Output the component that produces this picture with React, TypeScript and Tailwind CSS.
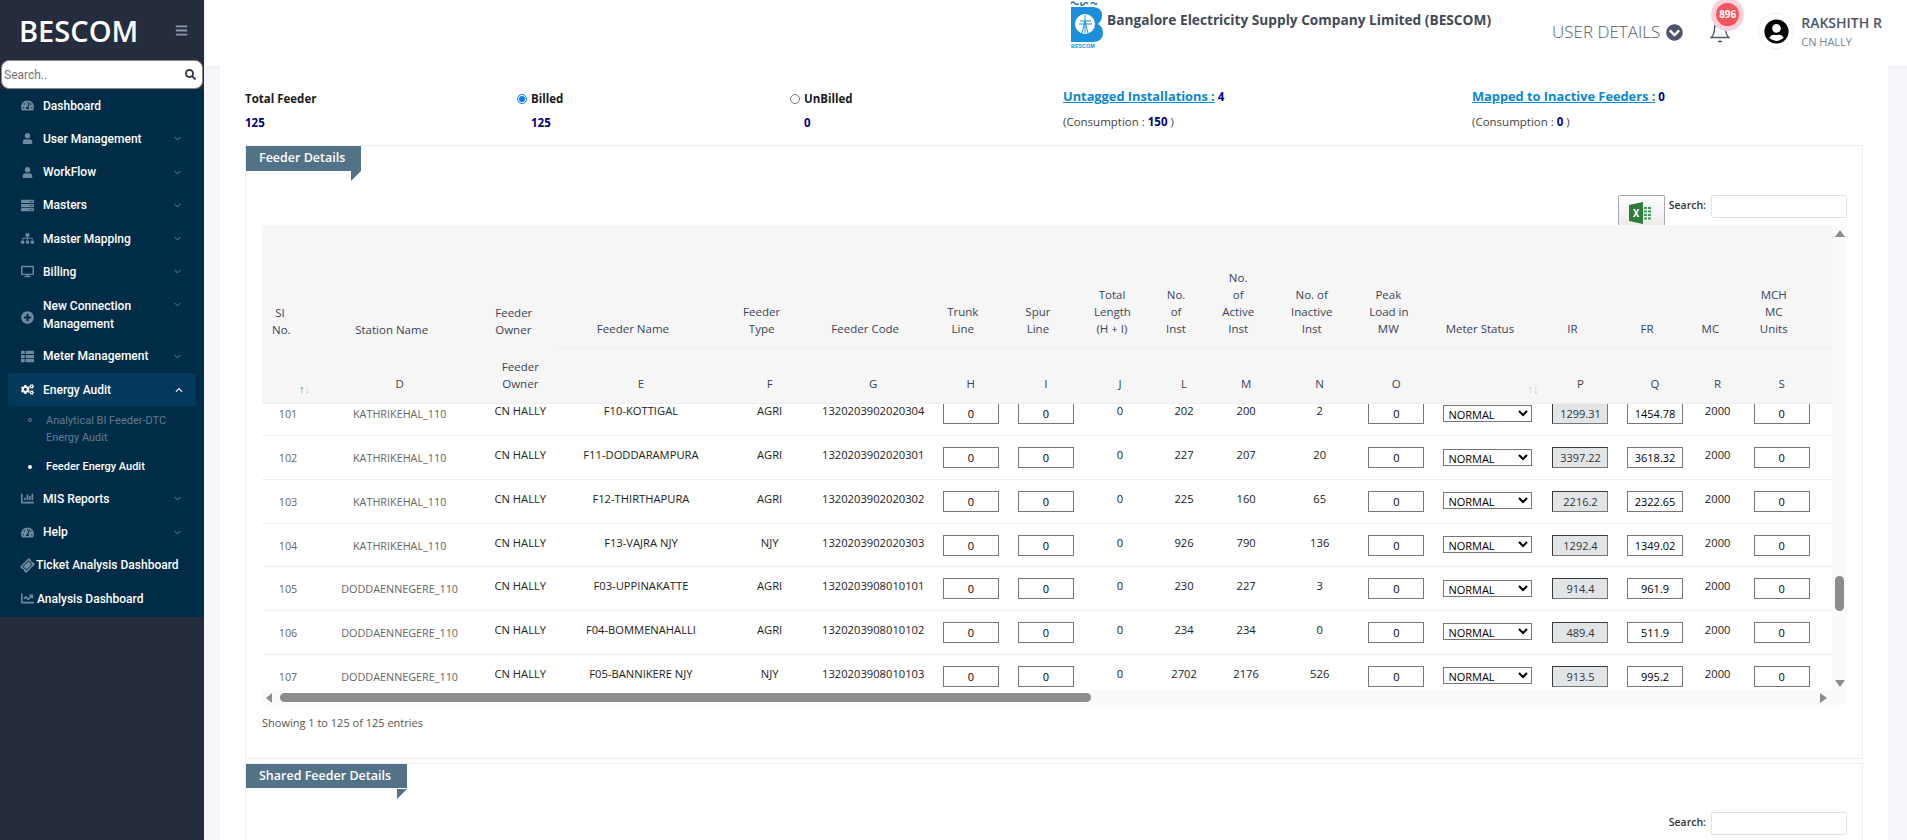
import React from "react";
import { FaTachometerAlt, FaUser, FaServer, FaSitemap, FaDesktop, FaPlusCircle, FaThList, FaCogs, FaChartBar, FaTicketAlt, FaChartLine, FaSearch, FaBars, FaChevronCircleDown, FaUserCircle, FaChevronUp } from "react-icons/fa";
import { FiChevronDown } from "react-icons/fi";

const colClasses = ["w-[52px]","w-[171px]","w-[70px]","w-[171px]","w-[86px]","w-[121px]","w-[74px]","w-[76px]","w-[72px]","w-[56px]","w-[68px]","w-[79px]","w-[74px]","w-[109px]","w-[76px]","w-[73px]","w-[52px]","w-[76px]","w-[82px]"];

function Cols() {
  return <colgroup>{colClasses.map((c, i) => <col key={i} className={c} />)}</colgroup>;
}

const heads: string[][] = [["SI","No."],["Station Name"],["Feeder","Owner"],["Feeder Name"],["Feeder","Type"],["Feeder Code"],["Trunk","Line"],["Spur","Line"],["Total","Length","(H + I)"],["No.","of","Inst"],["No.","of","Active","Inst"],["No. of","Inactive","Inst"],["Peak","Load in","MW"],["Meter Status"],["IR"],["FR"],["MC"],["MCH","MC","Units"],["Consumption"]];
const letters: string[][] = [[""],["D"],["Feeder","Owner"],["E"],["F"],["G"],["H"],["I"],["J"],["L"],["M"],["N"],["O"],[""],["P"],["Q"],["R"],["S"],[""]];

const rows = [
  ["101","KATHRIKEHAL_110","F10-KOTTIGAL","AGRI","1320203902020304","202","200","2","1299.31","1454.78"],
  ["102","KATHRIKEHAL_110","F11-DODDARAMPURA","AGRI","1320203902020301","227","207","20","3397.22","3618.32"],
  ["103","KATHRIKEHAL_110","F12-THIRTHAPURA","AGRI","1320203902020302","225","160","65","2216.2","2322.65"],
  ["104","KATHRIKEHAL_110","F13-VAJRA NJY","NJY","1320203902020303","926","790","136","1292.4","1349.02"],
  ["105","DODDAENNEGERE_110","F03-UPPINAKATTE","AGRI","1320203908010101","230","227","3","914.4","961.9"],
  ["106","DODDAENNEGERE_110","F04-BOMMENAHALLI","AGRI","1320203908010102","234","234","0","489.4","511.9"],
  ["107","DODDAENNEGERE_110","F05-BANNIKERE NJY","NJY","1320203908010103","2702","2176","526","913.5","995.2"],
];

type Item = { icon: React.ReactNode; label: string[]; chevron?: boolean };
const ic = "text-[#6d8aa0] text-[13px]";
const icUser = "ml-[1px] text-[#6d8aa0] text-[11px]";
const items1: Item[] = [
  { icon: <FaTachometerAlt className={ic} />, label: ["Dashboard"] },
  { icon: <FaUser className={icUser} />, label: ["User Management"], chevron: true },
  { icon: <FaUser className={icUser} />, label: ["WorkFlow"], chevron: true },
  { icon: <FaServer className={ic} />, label: ["Masters"], chevron: true },
  { icon: <FaSitemap className={ic} />, label: ["Master Mapping"], chevron: true },
  { icon: <FaDesktop className={ic} />, label: ["Billing"], chevron: true },
  { icon: <FaPlusCircle className={ic} />, label: ["New Connection", "Management"], chevron: true },
  { icon: <FaThList className={ic} />, label: ["Meter Management"], chevron: true },
];

function NavItem({ item }: { item: Item }) {
  const two = item.label.length > 1;
  return (
    <div className={two ? "flex h-[51.2px] pl-[21px] pr-[21px]" : "flex h-[33.25px] items-center pl-[21px] pr-[21px]"}>
      <span className={two ? "flex w-[22px] shrink-0 items-center pt-[6px]" : "flex w-[22px] shrink-0 items-center"}>{item.icon}</span>
      <span className={two ? "flex-1 pt-[8px] text-[12px] leading-[18px] text-white" : "flex-1 text-[12px] leading-[18px] text-white"}>
        {item.label.map((l) => <span key={l} className="block">{l}</span>)}
      </span>
      {item.chevron && <span className={two ? "pt-[10px]" : ""}><FiChevronDown className="text-[11px] text-[#6d8aa0]" /></span>}
    </div>
  );
}

function Sidebar() {
  return (
    <aside className="flex w-[204px] shrink-0 flex-col bg-[#252c3d] font-['Roboto',sans-serif] font-medium">
      <div className="flex h-[60px] items-center justify-between pl-[19px] pr-[16px]">
        <span className="font-['Open_Sans',sans-serif] text-[29px] font-semibold leading-none text-white">BESCOM</span>
        <FaBars className="text-[13px] text-[#8a97a8]" />
      </div>
      <div className="mx-[1px] flex h-[29px] items-center rounded-[8px] border border-[#888] bg-white pl-[2px] pr-[6px]">
        <input placeholder="Search.." className="w-full min-w-0 bg-transparent text-[12px] font-normal text-[#333] outline-none placeholder:text-[#757575]" />
        <FaSearch className="shrink-0 text-[11px] text-[#2a3340]" />
      </div>
      <nav className="bg-[#012c47] pb-[2px]">
        {items1.map((it) => <NavItem key={it.label[0]} item={it} />)}
        <div className="mx-[8px] flex h-[33.25px] items-center rounded-[3px] bg-[#03395a] pl-[13px] pr-[13px]">
          <span className="flex w-[22px] shrink-0 items-center"><FaCogs className="text-[13px] text-white" /></span>
          <span className="flex-1 text-[12px] text-white">Energy Audit</span>
          <FaChevronUp className="text-[8px] text-[#dbe5ec]" />
        </div>
        <div className="flex h-[46px] pl-[28px] pt-[6px]">
          <span className="mt-[6px] h-[4px] w-[4px] shrink-0 rounded-full border border-[#5f7c90]" />
          <span className="pl-[14px] text-[11px] font-normal leading-[17px] text-[#5f7c90]">Analytical BI Feeder-DTC<br />Energy Audit</span>
        </div>
        <div className="flex h-[30px] items-center pl-[28px]">
          <span className="h-[4px] w-[4px] shrink-0 rounded-full bg-white" />
          <span className="pl-[14px] text-[11px] text-white">Feeder Energy Audit</span>
        </div>
        <NavItem item={{ icon: <FaChartBar className={ic} />, label: ["MIS Reports"], chevron: true }} />
        <NavItem item={{ icon: <FaTachometerAlt className={ic} />, label: ["Help"], chevron: true }} />
        <div className="flex h-[33.25px] items-center pl-[21px]">
          <FaTicketAlt className="-rotate-45 text-[13px] text-[#6d8aa0]" />
          <span className="pl-[2px] text-[12px] text-white">Ticket Analysis Dashboard</span>
        </div>
        <div className="flex h-[33.25px] items-center pl-[21px]">
          <FaChartLine className="text-[13px] text-[#6d8aa0]" />
          <span className="pl-[3px] text-[12px] text-white">Analysis Dashboard</span>
        </div>
      </nav>
    </aside>
  );
}

function Logo() {
  return (
    <svg viewBox="0 0 34 48" className="h-[48px] w-[34px] shrink-0">
      <path d="M1 3.5 q2 -3 4 0 q2 2 3.5 0 M11 2 v3 q2 1 3 -1 q2 -3 4 0 M21 4 q2 -3 4 0 q1 1 2 -1" fill="none" stroke="#2a6fb0" strokeWidth="1.4" />
      <path d="M1 7 H22 Q32 7 32 15 Q32 21 28 24 Q33 27 33 33 Q33 42 22 42 H1 Z" fill="#1a8fdc" />
      <circle cx="15" cy="24" r="10" fill="#fff" />
      <path d="M15 15 V33 M10 21 H21 M9 24 H22 M12 33 L15 21 L18 33" fill="none" stroke="#1a8fdc" strokeWidth="1" />
      <rect x="0" y="43" width="31" height="5" fill="#fff" />
      <text x="1" y="47.5" fontSize="5.4" fontWeight="700" fill="#1a8fdc" fontFamily="'Liberation Sans', sans-serif">BESCOM</text>
    </svg>
  );
}

function Topbar() {
  return (
    <header className="ml-[2px] flex h-[66px] shrink-0 bg-white pl-[864px] shadow-[0_1px_4px_rgba(0,0,0,0.06)]">
      <div className="flex w-[513px] items-start">
        <Logo />
        <span className="whitespace-nowrap pl-[3px] pt-[10px] text-[13.7px] font-bold leading-[20px] text-[#434a58]">Bangalore Electricity Supply Company Limited (BESCOM)</span>
      </div>
      <div className="flex h-[64px] items-center">
        <span className="-ml-[31px] whitespace-nowrap font-['Open_Sans',sans-serif] text-[17px] font-light text-[#555c6b]">USER DETAILS</span>
        <FaChevronCircleDown className="ml-[6px] text-[17px] text-[#4d5469]" />
      </div>
      <div className="relative ml-[27px] mt-[21px] h-[22px] w-[20px]">
        <svg viewBox="0 0 18 20" className="h-[22px] w-[20px]" fill="none" stroke="#4d5469" strokeWidth="1.2">
          <path d="M1 15 C3 13 4 11 4 7 C4 3 6 1 9 1 C12 1 14 3 14 7 C14 11 15 13 17 15 Z" />
          <path d="M7.5 18 Q9 19.5 10.5 18" strokeWidth="1.5" />
        </svg>
        <span className="absolute left-[1px] top-[-23px] flex h-[33px] w-[33px] items-center justify-center rounded-full bg-[#fbd0dc]">
          <span className="flex h-[23px] w-[23px] items-center justify-center rounded-full bg-[#f4545c] text-[10px] font-bold text-white">896</span>
        </span>
      </div>
      <div className="ml-[28px] mt-[13px] flex h-[36px] w-[36px] items-center justify-center rounded-full border border-[#eeeeee]">
        <FaUserCircle className="text-[25px] text-black" />
      </div>
      <div className="whitespace-nowrap pl-[7px] pt-[13px] font-['Open_Sans',sans-serif]">
        <div className="text-[14px] font-semibold leading-[20px] text-[#4d5566]">RAKSHITH R</div>
        <div className="pt-[1px] text-[11px] leading-[16px] text-[#7a8299]">CN HALLY</div>
      </div>
    </header>
  );
}

function Stats() {
  const num = "text-[11.5px] font-bold text-[#00007f]";
  const link = "text-[12.8px] font-bold text-[#0a87d6] underline";
  return (
    <div className="grid grid-cols-[272px_273px_273px_410px_1fr] pt-[24px] text-[11.5px] leading-[17px] text-[#333]">
      <div>
        <div className="font-bold text-[#1a1a1a]">Total Feeder</div>
        <div className={"pt-[7px] " + num}>125</div>
      </div>
      <div>
        <div className="flex items-center font-bold text-[#1a1a1a]"><input type="radio" defaultChecked name="b" className="m-0 h-[10px] w-[10px]" /><span className="pl-[4px]">Billed</span></div>
        <div className={"pl-[14px] pt-[7px] " + num}>125</div>
      </div>
      <div>
        <div className="flex items-center font-bold text-[#1a1a1a]"><input type="radio" name="b" className="m-0 h-[10px] w-[10px]" /><span className="pl-[4px]">UnBilled</span></div>
        <div className={"pl-[14px] pt-[7px] " + num}>0</div>
      </div>
      <div className="-mt-[2px]">
        <div><span className={link}>Untagged Installations :</span> <span className={num}>4</span></div>
        <div className="pt-[8px] text-[#444]">(Consumption : <span className={num}>150</span> )</div>
      </div>
      <div className="-mt-[2px] -ml-[1px]">
        <div><span className={link}>Mapped to Inactive Feeders :</span> <span className={num}>0</span></div>
        <div className="pt-[8px] text-[#444]">(Consumption : <span className={num}>0</span> )</div>
      </div>
    </div>
  );
}

function Tab({ label, width, gap }: { label: string; width: string; gap?: boolean }) {
  return (
    <div className={width}>
      <div className={"flex items-center pl-[13px] text-[12.5px] font-semibold text-white bg-[#527288] " + (gap ? "h-[24px]" : "h-[25px]")}>{label}</div>
      {gap && <div className="h-[1px]" />}
      <div className="ml-auto h-[10px] w-[10px] bg-[#527288] [clip-path:polygon(0_0,100%_0,0_100%)]" />
    </div>
  );
}

function SearchBox() {
  return (
    <div className="flex items-start">
      <span className="pr-[5px] pt-[1px] text-[10.5px] font-semibold leading-[19px] text-[#333]">Search:</span>
      <input className="h-[23px] w-[136px] rounded-[2px] border border-[#e2e2e2] bg-white" />
    </div>
  );
}

function Excel() {
  return (
    <div className="mr-[4px] flex h-[30px] w-[47px] items-start justify-center rounded-t-[2px] border border-b-0 border-[#a8a8a8] bg-gradient-to-b from-white to-[#ececec] pt-[6px]">
      <svg viewBox="0 0 24 22" className="h-[22px] w-[24px]">
        <rect x="9" y="3" width="15" height="16" fill="#eef3ee" />
        <path d="M15 5h3v2h-3zM19 5h3v2h-3zM15 8.5h3v2h-3zM19 8.5h3v2h-3zM15 12h3v2h-3zM19 12h3v2h-3zM15 15.5h3v2h-3zM19 15.5h3v2h-3z" fill="#3c9a56" />
        <path d="M0 3 L14 0 V22 L0 19 Z" fill="#2f7d3b" />
        <path d="M4 7 L6 7 L7.2 9.6 L8.5 7 L10.4 7 L8.3 11 L10.4 15 L8.4 15 L7.2 12.4 L5.9 15 L4 15 L6.2 11 Z" fill="#fff" />
      </svg>
    </div>
  );
}

function Field({ value, gray }: { value: string; gray?: boolean }) {
  return (
    <input
      readOnly
      value={value}
      className={gray
        ? "block mx-auto h-[21px] w-[56px] border border-[#767676] border-t-[#3a3a3a] border-l-[#3a3a3a] bg-[#e2e5e8] text-center text-[11px] text-[#333]"
        : "block mx-auto h-[21px] w-[56px] border border-[#767676] bg-white text-center text-[11px] text-black"}
    />
  );
}

function FeederTable() {
  const tdBase = "h-[43.67px] border-b border-[#eeeeee] p-0 text-center align-middle";
  const hi = "pb-[6px] text-[11.2px] font-medium text-[#222]";
  const lo = "text-[10.8px] text-[#666]";
  return (
    <div>
      <div className="flex">
        <div className="w-[1570px] overflow-hidden">
          <table className="w-[1640px] table-fixed border-collapse bg-[#f6f6f6] text-[11.5px] leading-[17px] text-[#3a4356]">
            <Cols />
            <thead>
              <tr>
                {heads.map((h, i) => (
                  <th key={i} className={(i < 3 ? "" : "border-b border-[#eeeeee] ") + (i === 18 ? "h-[122px] pl-[13px] pb-[44px] text-left align-bottom font-normal" : i < 3 ? "h-[122px] pl-[10px] pr-[26px] pb-[9px] text-center align-bottom font-normal" : "h-[122px] pl-[10px] pr-[26px] pb-[10px] text-center align-bottom font-normal")}>
                    {h.map((l) => <span key={l} className="block whitespace-nowrap">{l}</span>)}
                  </th>
                ))}
              </tr>
              <tr>
                {letters.map((h, i) => (
                  <th key={i} className="relative h-[56px] p-0 pb-[11px] text-center align-bottom font-normal">
                    {h.map((l) => <span key={l || "e"} className="block whitespace-nowrap">{l || "\u00a0"}</span>)}
                    {(i === 0 || i === 13) && <span className="absolute bottom-[8px] right-[4px] text-[11px] leading-[12px] text-[#c8c8c8]"><span className={i === 0 ? "text-[#777]" : ""}>↑</span>↓</span>}
                  </th>
                ))}
              </tr>
            </thead>
          </table>
          <div className="h-[287px] overflow-hidden border-t border-[#eeeeee]">
            <table className="-mt-[11.7px] w-[1640px] table-fixed border-collapse bg-white text-[11.5px] leading-[17px]">
              <Cols />
              <tbody>
                {rows.map((r) => (
                  <tr key={r[0]}>
                    <td className={tdBase + " " + lo}>{r[0]}</td>
                    <td className={tdBase + " " + lo}>{r[1]}</td>
                    <td className={tdBase + " " + hi}>CN HALLY</td>
                    <td className={tdBase + " " + hi}>{r[2]}</td>
                    <td className={tdBase + " " + hi}>{r[3]}</td>
                    <td className={tdBase + " " + hi}>{r[4]}</td>
                    <td className={tdBase}><Field value="0" /></td>
                    <td className={tdBase}><Field value="0" /></td>
                    <td className={tdBase + " " + hi}>0</td>
                    <td className={tdBase + " " + hi}>{r[5]}</td>
                    <td className={tdBase + " " + hi}>{r[6]}</td>
                    <td className={tdBase + " " + hi}>{r[7]}</td>
                    <td className={tdBase}><Field value="0" /></td>
                    <td className={tdBase}>
                      <select className="mx-auto -mt-[1px] block h-[17px] w-[89px] border border-[#767676] bg-white text-[11px] leading-none text-black" defaultValue="NORMAL"><option>NORMAL</option></select>
                    </td>
                    <td className={tdBase}><Field value={r[8]} gray /></td>
                    <td className={tdBase}><Field value={r[9]} /></td>
                    <td className={tdBase + " " + hi}>2000</td>
                    <td className={tdBase}><Field value="0" /></td>
                    <td className={tdBase}></td>
                  </tr>
                ))}
              </tbody>
            </table>
          </div>
        </div>
        <div className="flex w-[15px] flex-col items-center bg-[#fafafa] pt-[5px]">
          <div className="h-0 w-0 border-x-[5px] border-b-[7px] border-x-transparent border-b-[#8c8c8c]" />
          <div className="mt-[339px] h-[35px] w-[9px] rounded-[5px] bg-[#8c8c8c]" />
          <div className="mt-[69px] h-0 w-0 border-x-[5px] border-t-[7px] border-x-transparent border-t-[#8c8c8c]" />
        </div>
      </div>
      <div className="flex h-[15px] items-center bg-[#fafafa] pl-[4px]">
        <div className="h-0 w-0 border-y-[5px] border-r-[6px] border-y-transparent border-r-[#8c8c8c]" />
        <div className="ml-[8px] h-[9px] w-[811px] rounded-[5px] bg-[#8c8c8c]" />
        <div className="ml-[729px] h-0 w-0 border-y-[5px] border-l-[7px] border-y-transparent border-l-[#8c8c8c]" />
      </div>
    </div>
  );
}

export default function App() {
  return (
    <div className="flex h-[840px] w-[1907px] overflow-hidden bg-[#f6f7fb] font-['Open_Sans',sans-serif]">
      <Sidebar />
      <main className="flex min-w-0 flex-1 flex-col">
        <Topbar />
        <div className="ml-[16px] mr-[19px] flex-1 overflow-hidden bg-white px-[25px]">
          <Stats />
          <section className="mt-[14px] h-[614px] border border-[#eeeeee]">
            <Tab label="Feeder Details" width="w-[115px]" />
            <div className="mt-[14px] flex justify-end pr-[15px]">
              <Excel />
              <SearchBox />
            </div>
            <div className="ml-[16px] mr-[15px]"><FeederTable /></div>
            <div className="ml-[16px] pt-[9px] text-[11px] leading-[17px] text-[#555]">Showing 1 to 125 of 125 entries</div>
          </section>
          <section className="mt-[4px] h-[120px] border border-[#eeeeee]">
            <Tab label="Shared Feeder Details" width="w-[161px]" gap />
            <div className="mt-[13px] flex justify-end pr-[15px]"><SearchBox /></div>
          </section>
        </div>
      </main>
    </div>
  );
}
